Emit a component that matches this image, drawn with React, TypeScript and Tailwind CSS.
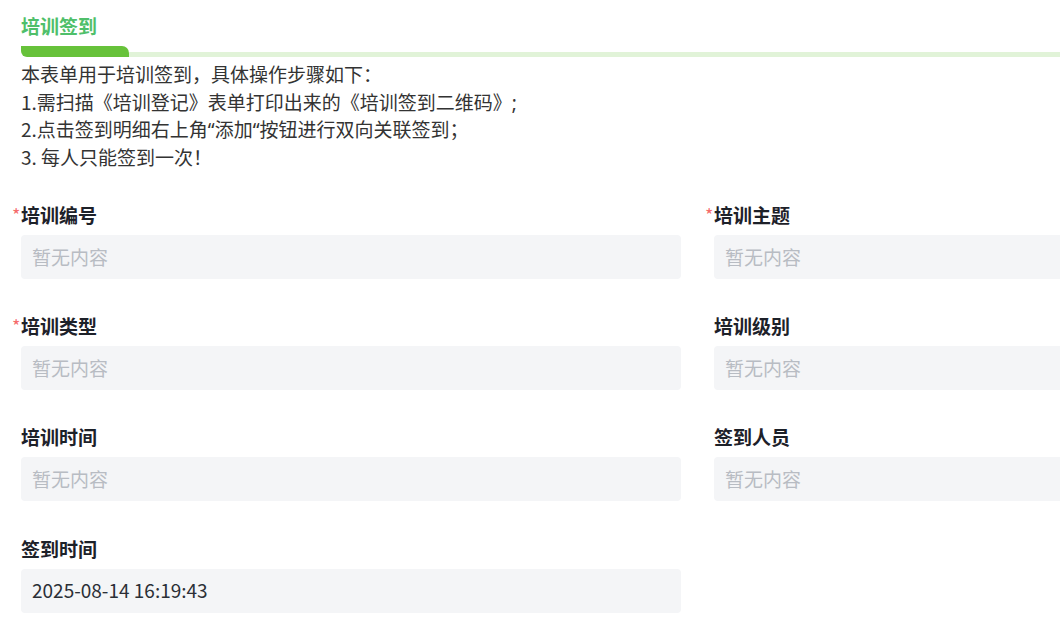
import React from "react";

type Field = { label: string; required?: boolean; value?: string };

const fields: Field[][] = [
  [
    { label: "培训编号", required: true },
    { label: "培训主题", required: true },
  ],
  [
    { label: "培训类型", required: true },
    { label: "培训级别" },
  ],
  [{ label: "培训时间" }, { label: "签到人员" }],
  [{ label: "签到时间", value: "2025-08-14 16:19:43" }],
];

function FieldBox({ f }: { f: Field }) {
  return (
    <div className="flex flex-col">
      <div className="relative h-[26px] text-[19px] leading-[26px] font-bold text-[#1d2129]">
        {f.required && (
          <span className="absolute left-[-9px] top-[2px] text-[18px] leading-[20px] font-normal text-[#f56c6c]">*</span>
        )}
        {f.label}
      </div>
      <div className="mt-[7px] flex h-[44px] items-center rounded-[4px] bg-[#f4f5f7] px-[11px] text-[19px]">
        {f.value ? (
          <span className="text-[#2b2f36]">{f.value}</span>
        ) : (
          <span className="text-[#b8bcc3]">暂无内容</span>
        )}
      </div>
    </div>
  );
}

export default function App() {
  return (
    <div
      className="h-[633px] w-[1060px] overflow-hidden bg-white"
      style={{ fontFamily: '"Noto Sans CJK SC", "Noto Sans", sans-serif' }}
    >
      <div className="pl-[21px] pt-[12px]">
        <div className="text-[19px] font-bold leading-[27px] text-[#4fbf6a]">培训签到</div>
        <div className="mt-[7px] flex items-end">
          <div className="h-[11px] w-[108px] rounded-tr-[7px] rounded-bl-[6px] bg-[#67c23a]" />
          <div className="h-[5px] flex-1 bg-[#e1f3d8]" />
        </div>
        <div className="mt-[3px] text-[19px] leading-[27.7px] text-[#333333]">
          <div className="h-[27.7px]">本表单用于培训签到，具体操作步骤如下：</div>
          <div className="h-[27.7px]">
            1.需扫描《培训登记》表单打印出来的《培训签到二维码》<span className="font-['Noto_Sans',sans-serif]">;</span>
          </div>
          <div className="h-[27.7px]">
            2.点击签到明细右上角<span className="font-['Noto_Sans',sans-serif]">“</span>添加
            <span className="font-['Noto_Sans',sans-serif]">“</span>按钮进行双向关联签到；
          </div>
          <div className="h-[27.7px]">3. 每人只能签到一次！</div>
        </div>
        <div className="mt-[31px] grid grid-cols-[660px_660px] gap-x-[33px] gap-y-[34.33px]">
          {fields.map((row, i) => (
            <React.Fragment key={i}>
              {row.map((f) => (
                <FieldBox key={f.label} f={f} />
              ))}
              {row.length === 1 && <div />}
            </React.Fragment>
          ))}
        </div>
      </div>
    </div>
  );
}
